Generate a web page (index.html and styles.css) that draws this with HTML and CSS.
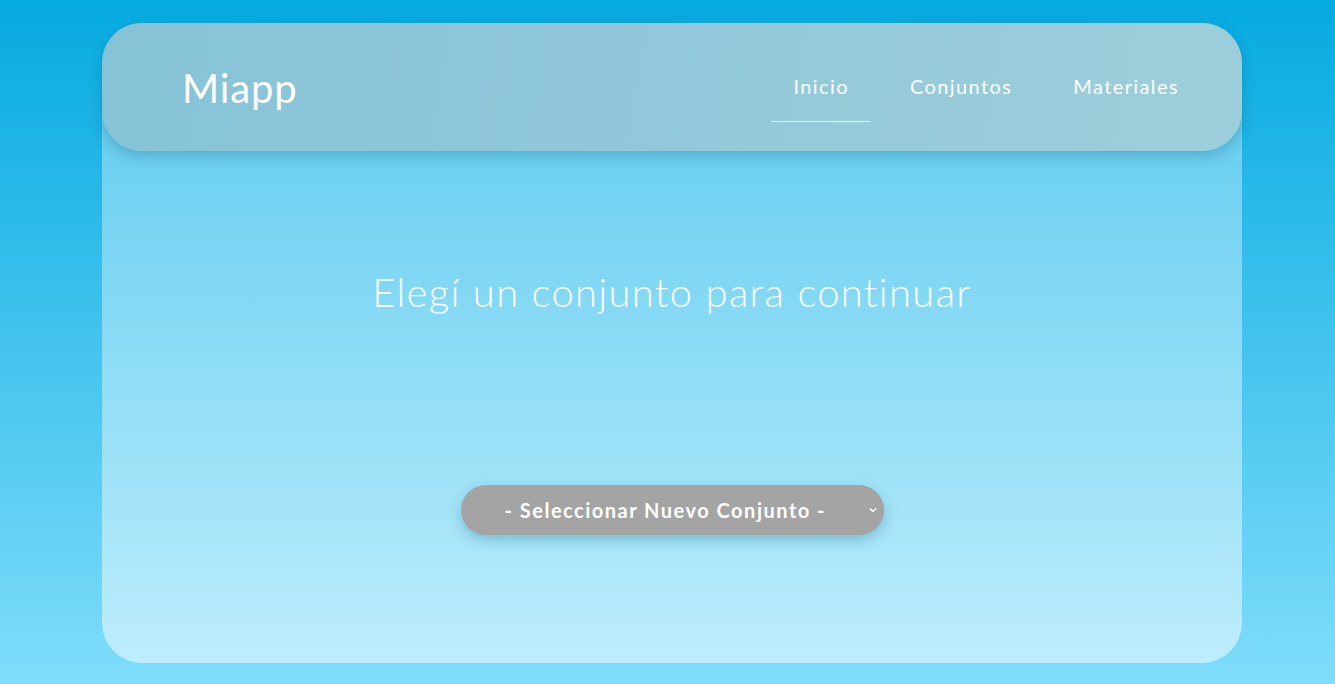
FILE: index.html
```html
<!DOCTYPE html>
<html lang="es">
<head>
<meta charset="utf-8">
<title>Miapp</title>
<link rel="stylesheet" href="styles.css">
</head>
<body>
<div class="page">
  <main class="card">
    <header class="header">
      <div class="brand">Miapp</div>
      <nav class="nav">
        <a class="nav-link active" href="#">Inicio</a>
        <a class="nav-link" href="#">Conjuntos</a>
        <a class="nav-link" href="#">Materiales</a>
      </nav>
    </header>
    <section class="content">
      <h1 class="title">Elegí un conjunto para continuar</h1>
      <div class="select-wrap">
        <div class="select">
          <span class="select-text">- Seleccionar Nuevo Conjunto -</span>
          <svg class="chev" width="8" height="6" viewBox="0 0 8 6"><path d="M1 1.5 L4 4.5 L7 1.5" fill="none" stroke="#fff" stroke-width="1.5"/></svg>
        </div>
      </div>
    </section>
  </main>
</div>
</body>
</html>
```
FILE: styles.css
```css
html, body {
  margin: 0;
  padding: 0;
  height: 100%;
}
body {
  background: linear-gradient(180deg, #05aae0 0%, #80ddfb 100%);
  font-family: Lato, "Open Sans", sans-serif;
  color: #fff;
}
.page {
  padding: 23px 93px 21px 102px;
  height: 684px;
  box-sizing: border-box;
}
.card {
  width: 1140px;
  height: 640px;
  border-radius: 40px;
  background: linear-gradient(180deg, #58c9ee 0%, #bdedfc 100%);
  display: flex;
  flex-direction: column;
}
.header {
  height: 128px;
  border-radius: 40px;
  background: linear-gradient(100deg, #86c3d7 0%, #9dcedb 100%);
  box-shadow: 0 6px 14px rgba(0, 60, 90, 0.22);
  display: flex;
  align-items: center;
  justify-content: space-between;
  padding: 0 42px 0 80px;
  box-sizing: border-box;
}
.brand {
  font-size: 40px;
  font-weight: 400;
  letter-spacing: 0.9px;
  margin-top: 2px;
}
.nav {
  display: flex;
  align-self: flex-start;
  gap: 18px;
}
.nav-link {
  color: #fff;
  text-decoration: none;
  font-size: 20px;
  letter-spacing: 1.4px;
  padding: 27px 21px 0 22px;
  height: 99px;
  box-sizing: border-box;
  display: flex;
  align-items: center;
}
.nav-link.active {
  box-shadow: inset 0 -1px 0 #fff;
}
.content {
  flex: 1;
  display: flex;
  flex-direction: column;
  align-items: center;
}
.title {
  margin: 117px 0 0;
  font-size: 40px;
  font-weight: 300;
  letter-spacing: 1.3px;
  line-height: 48px;
}
.select-wrap {
  margin-top: 169px;
}
.select {
  width: 423px;
  height: 50px;
  border-radius: 25px;
  background: #a4a4a4;
  box-shadow: 0 5px 14px rgba(0, 80, 110, 0.28);
  display: flex;
  align-items: center;
  position: relative;
  box-sizing: border-box;
  padding-left: 44px;
}
.select-text {
  font-size: 20px;
  font-weight: 700;
  letter-spacing: 1.5px;
}
.chev {
  position: absolute;
  right: 7px;
  top: 22px;
}
```
